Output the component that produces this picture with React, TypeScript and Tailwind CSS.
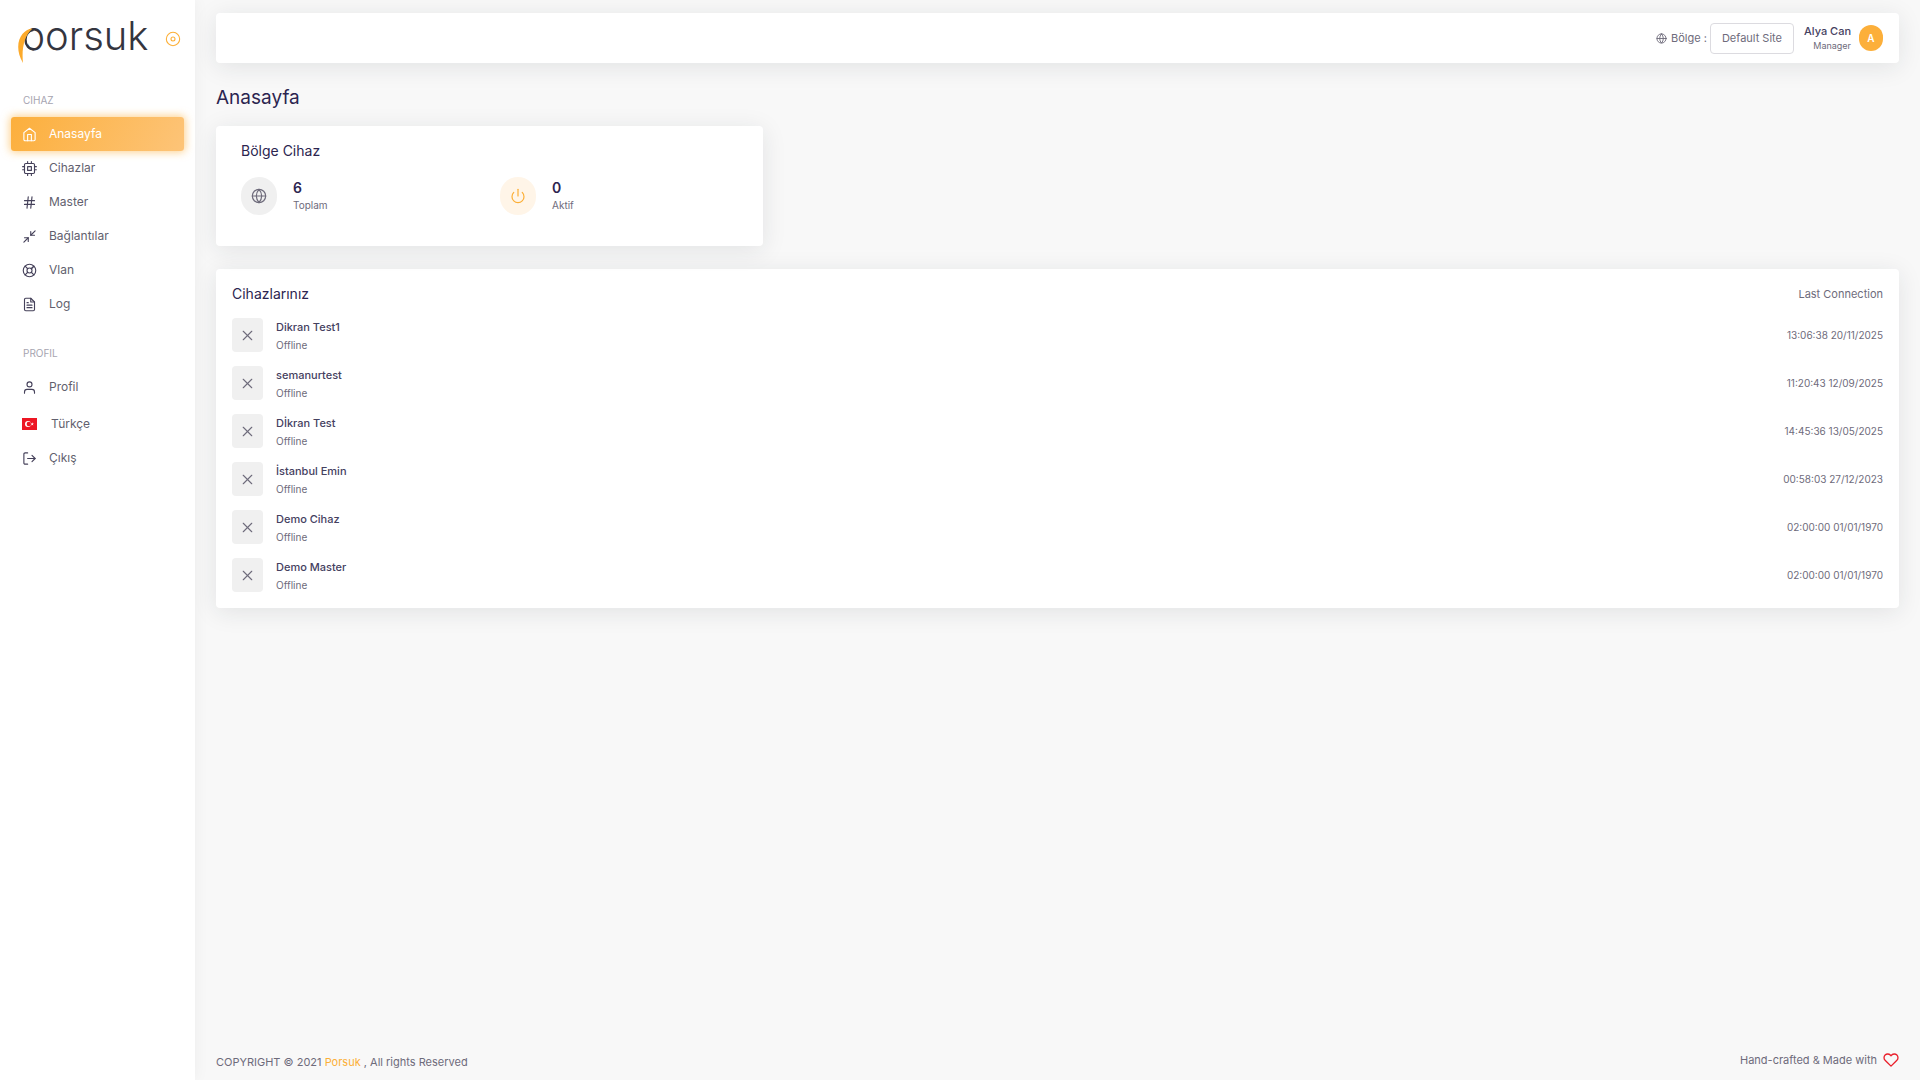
import type { ReactNode } from 'react';
import type { IconType } from 'react-icons';
import {
  FiCpu,
  FiDisc,
  FiFileText,
  FiGlobe,
  FiHash,
  FiHeart,
  FiHome,
  FiLifeBuoy,
  FiLogOut,
  FiMinimize2,
  FiPower,
  FiUser,
  FiX,
} from 'react-icons/fi';

interface NavItem {
  label: string;
  icon: IconType;
  active?: boolean;
}

const deviceNav: NavItem[] = [
  { label: 'Anasayfa', icon: FiHome, active: true },
  { label: 'Cihazlar', icon: FiCpu },
  { label: 'Master', icon: FiHash },
  { label: 'Bağlantılar', icon: FiMinimize2 },
  { label: 'Vlan', icon: FiLifeBuoy },
  { label: 'Log', icon: FiFileText },
];

const devices = [
  { name: 'Dikran Test1', status: 'Offline', last: '13:06:38 20/11/2025' },
  { name: 'semanurtest', status: 'Offline', last: '11:20:43 12/09/2025' },
  { name: 'Dİkran Test', status: 'Offline', last: '14:45:36 13/05/2025' },
  { name: 'İstanbul Emin', status: 'Offline', last: '00:58:03 27/12/2023' },
  { name: 'Demo Cihaz', status: 'Offline', last: '02:00:00 01/01/1970' },
  { name: 'Demo Master', status: 'Offline', last: '02:00:00 01/01/1970' },
];

export default function App() {
  return (
    <div className="flex min-h-screen bg-[#f8f8f8] font-['Inter','Noto_Sans',sans-serif] text-[#6e6b7b]">
      <Sidebar />
      <div className="flex min-w-0 flex-1 flex-col px-[21px] pt-[13px]">
        <Navbar />
        <main className="flex-1">
          <h1 className="mt-[22px] mb-[15px] text-[19px] leading-[26px] text-[#2c2550]">Anasayfa</h1>
          <div className="grid grid-cols-3 gap-[21px]">
            <SiteSummary />
          </div>
          <DeviceList />
        </main>
        <Footer />
      </div>
    </div>
  );
}

function Sidebar() {
  return (
    <aside className="w-[195px] shrink-0 bg-white shadow-[0_0_15px_0_rgba(34,41,47,0.05)]">
      <div className="flex h-[83px] items-start justify-between pr-[14px] pl-[18px]">
        <Logo />
        <button type="button" aria-label="Menüyü sabitle" className="mt-[31px] text-[#fcaf37]">
          <FiDisc size={16} strokeWidth={1.6} />
        </button>
      </div>
      <nav className="px-[11px]">
        <NavHeading>CIHAZ</NavHeading>
        <ul>
          {deviceNav.map((item) => (
            <NavLink key={item.label} label={item.label} active={item.active}>
              <item.icon size={15} strokeWidth={1.8} />
            </NavLink>
          ))}
        </ul>
        <div className="h-[15px]" />
        <NavHeading>PROFIL</NavHeading>
        <ul>
          <NavLink label="Profil">
            <FiUser size={15} strokeWidth={1.8} />
          </NavLink>
          <li className="mt-[3px]">
            <a href="#" className="flex h-[34px] items-center gap-[14px] pl-[11px] text-[12px] text-[#625f6e]">
              <TurkishFlag />
              Türkçe
            </a>
          </li>
          <NavLink label="Çıkış">
            <FiLogOut size={15} strokeWidth={1.8} />
          </NavLink>
        </ul>
      </nav>
    </aside>
  );
}

function NavHeading({ children }: { children: ReactNode }) {
  return <h2 className="h-[34px] pl-3 text-[10px] leading-[34px] text-[#a6a4b0]">{children}</h2>;
}

function NavLink({ label, active, children }: { label: string; active?: boolean; children: ReactNode }) {
  return (
    <li>
      <a
        href="#"
        className={
          active
            ? 'flex h-[34px] items-center gap-3 rounded-[3px] bg-linear-[118deg,#fcaf3c,#fdc478] pl-[11px] text-[12px] text-white shadow-[0_0_8px_1px_rgba(252,175,55,0.6)]'
            : 'flex h-[34px] items-center gap-3 pl-[11px] text-[12px] text-[#625f6e]'
        }
      >
        <span className={active ? 'text-white' : 'text-[#45415a]'}>{children}</span>
        {label}
      </a>
    </li>
  );
}

function Logo() {
  return (
    <a href="#" aria-label="porsuk" className="mt-2">
      <svg width="136" height="62" viewBox="0 -8 136 62">
        <text
          x="3"
          y="34"
          fontSize="40"
          fontWeight="300"
          fill="#34353f"
          className="font-['Inter',sans-serif]"
        >
          porsuk
        </text>
        {/* the sickle stands in for the stem of the p */}
        <path d="M0 8h10v46H0z" fill="#fff" />
        <path
          d="M15.500 13.700C10 14.500 7.500 18.500 7.500 23.500c0 6 3.500 9.700 8.500 9.700"
          fill="none"
          stroke="#34353f"
          strokeWidth="2.400"
        />
        <path d="M14.500 12.500C4 13-6 28 5 47C3.500 33 6 20 14.500 12.500z" fill="#fcaa2b" />
      </svg>
    </a>
  );
}

function TurkishFlag() {
  return (
    <svg width="15" height="12" viewBox="0 0 15 12" className="shrink-0">
      <rect width="15" height="12" fill="#ed1623" />
      <circle cx="6" cy="6" r="3" fill="#fff" />
      <circle cx="6.900" cy="6" r="2.300" fill="#ed1623" />
      <path d="M10.200 4.300l.4 1.200 1.300 0-1 .7.4 1.300-1.100-.8-1.100.8.4-1.300-1-.7 1.300 0z" fill="#fff" />
    </svg>
  );
}

function Navbar() {
  return (
    <header className="flex h-[50px] items-center justify-end rounded-[4px] bg-white px-4 shadow-[0_4px_24px_0_rgba(34,41,47,0.1)]">
      <FiGlobe size={11} />
      <span className="ml-1 text-[11px]">Bölge :</span>
      <button type="button" className="ml-[3px] h-[31px] rounded-[4px] border border-[#dcdbe0] px-[11px] text-[11px]">
        Default Site
      </button>
      <div className="ml-[10px] text-right">
        <div className="text-[11px] leading-[15px] font-medium text-[#45415f]">Alya Can</div>
        <div className="text-[9px] leading-[14px]">Manager</div>
      </div>
      <span className="ml-2 flex h-[26px] w-6 items-center justify-center rounded-full bg-[#fcaf3a] text-[10px] font-semibold text-white">
        A
      </span>
    </header>
  );
}

function SiteSummary() {
  return (
    <section className="h-[120px] rounded-[4px] bg-white pt-[15px] pr-1 pl-[25px] shadow-[0_4px_24px_0_rgba(34,41,47,0.1)]">
      <h2 className="text-[14px] leading-5 text-[#2c2550]">Bölge Cihaz</h2>
      <div className="mt-4 grid grid-cols-2">
        <Stat value={6} label="Toplam">
          <span className="flex h-[38px] w-9 items-center justify-center rounded-full bg-[#f0f0f0] text-[#6e6b7b]">
            <FiGlobe size={16} strokeWidth={1.8} />
          </span>
        </Stat>
        <Stat value={0} label="Aktif">
          <span className="flex h-[38px] w-9 items-center justify-center rounded-full bg-[#fff5e8] text-[#fcaf37]">
            <FiPower size={16} strokeWidth={1.8} />
          </span>
        </Stat>
      </div>
    </section>
  );
}

function Stat({ value, label, children }: { value: number; label: string; children: ReactNode }) {
  return (
    <div className="flex items-center gap-4">
      {children}
      <div>
        <div className="text-[14px] leading-[18px] font-semibold text-[#2c2550]">{value}</div>
        <div className="text-[10px] leading-4">{label}</div>
      </div>
    </div>
  );
}

function DeviceList() {
  return (
    <section className="mt-[23px] rounded-[4px] bg-white p-4 shadow-[0_4px_24px_0_rgba(34,41,47,0.1)]">
      <div className="flex h-[18px] items-center justify-between">
        <h2 className="text-[14px] leading-4 text-[#2c2550]">Cihazlarınız</h2>
        <span className="text-[11px]">Last Connection</span>
      </div>
      <ul className="mt-[15px] space-y-[14px]">
        {devices.map((device) => (
          <li key={device.name} className="flex h-[34px] items-center">
            <span className="flex h-[34px] w-[31px] items-center justify-center rounded-[4px] bg-[#f0f0f0]">
              <FiX size={17} strokeWidth={1.6} />
            </span>
            <div className="ml-[13px] flex-1">
              <div className="text-[11px] leading-5 font-medium text-[#45415f]">{device.name}</div>
              <div className="text-[10px] leading-4">{device.status}</div>
            </div>
            <span className="text-[10px]">{device.last}</span>
          </li>
        ))}
      </ul>
    </section>
  );
}

function Footer() {
  return (
    <footer className="flex items-center justify-between pb-[10px] text-[11px] leading-4">
      <p className="pt-1">
        COPYRIGHT © 2021{' '}
        <a href="#" className="text-[#fcaf37]">
          Porsuk
        </a>{' '}
        , All rights Reserved
      </p>
      <p className="flex items-center gap-[6px]">
        Hand-crafted & Made with
        <FiHeart size={16} className="text-[#ea1f2b]" />
      </p>
    </footer>
  );
}
